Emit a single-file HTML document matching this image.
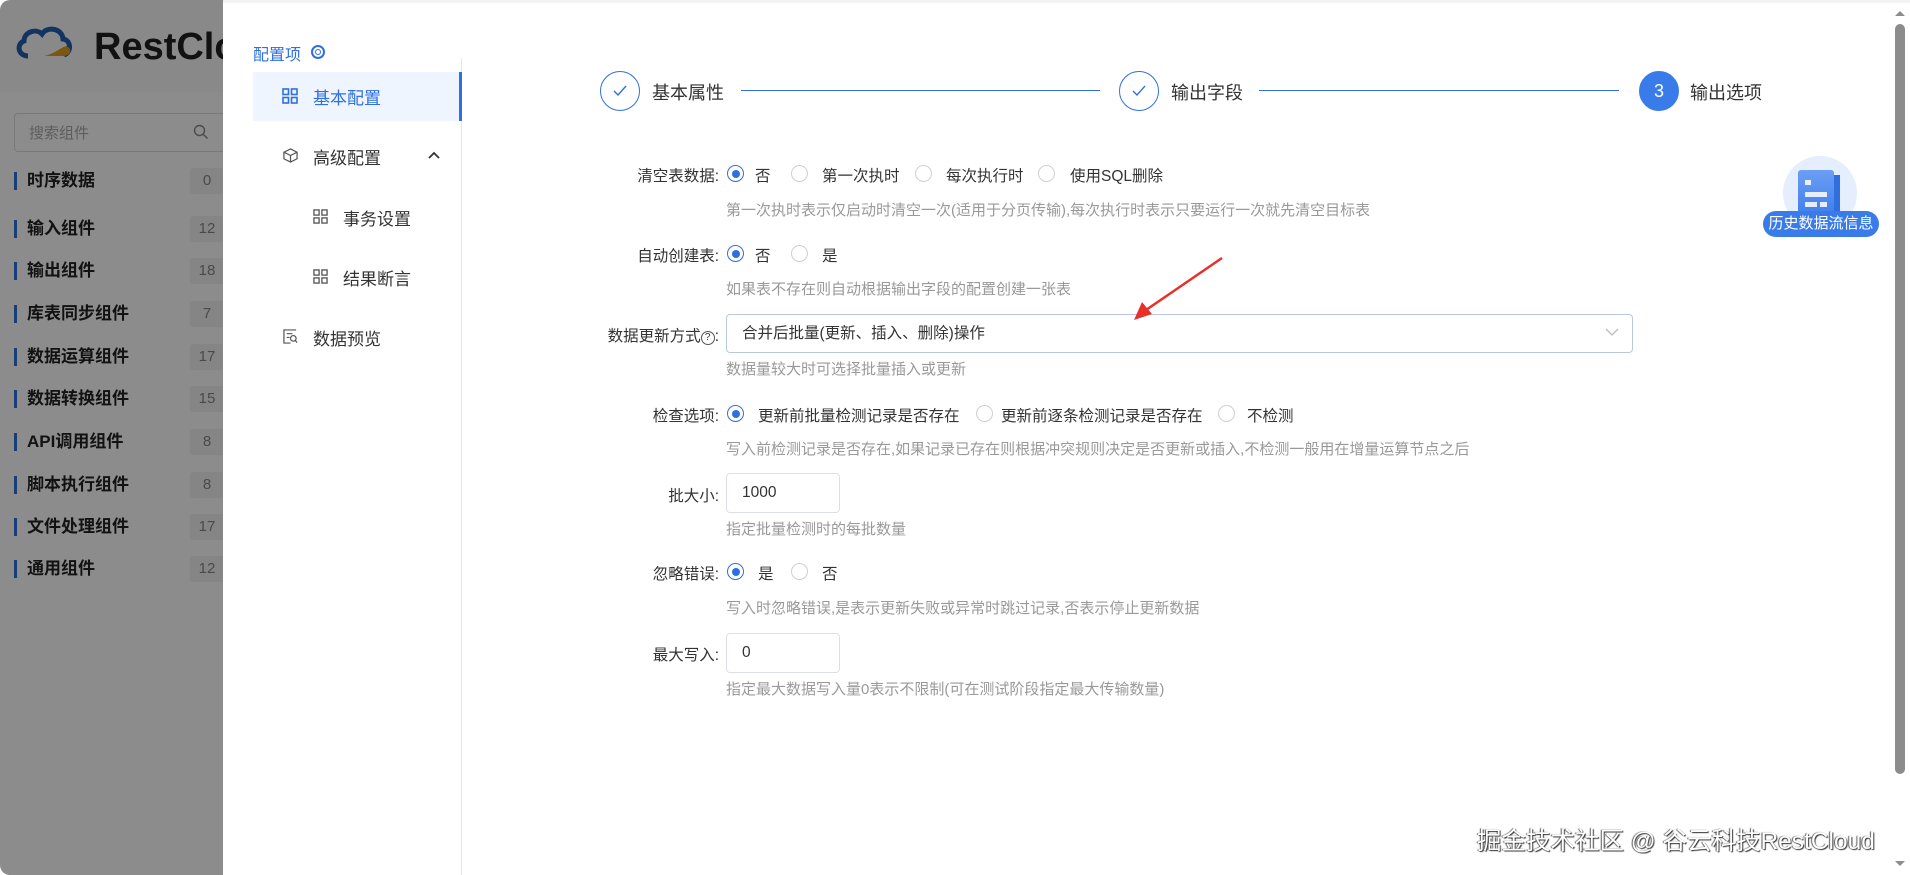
<!DOCTYPE html>
<html><head><meta charset="utf-8">
<style>
*{margin:0;padding:0;box-sizing:border-box}
body{width:1910px;height:875px;overflow:hidden;background:#fff;font-family:"Liberation Sans","Noto Sans CJK SC",sans-serif;position:relative;color:#333}
.a{position:absolute;white-space:nowrap}
#left{position:absolute;left:0;top:0;width:223px;height:875px;background:#fff;overflow:hidden;border-radius:10px 0 0 10px}
#ov{position:absolute;left:0;top:0;width:223px;height:875px;background:rgba(0,0,0,0.45);border-radius:10px 0 0 10px}
.cat{position:absolute;left:14px;font-size:17px;font-weight:bold;color:#222;border-left:3px solid #2f6fe0;padding-left:10px;line-height:18px}
.cnt{position:absolute;left:190px;width:34px;height:26px;background:#f2f2f2;color:#888;font-size:15px;text-align:center;line-height:26px;border-radius:3px}
.mi{position:absolute;font-size:17px;color:#333}
.lab{position:absolute;right:1191px;font-size:15.5px;color:#333;text-align:right}
.hint{position:absolute;left:726px;font-size:15px;color:#999}
.r{position:absolute;width:17px;height:17px;border-radius:50%;border:1px solid #d0d0d0;background:#fff}
.r.on{border-color:#2f6fe0}
.r.on:after{content:"";position:absolute;left:3.5px;top:3.5px;width:8px;height:8px;border-radius:50%;background:#2f6fe0}
.rt{position:absolute;font-size:15.5px;color:#333}
.inp{position:absolute;border:1px solid #dcdfe6;border-radius:4px;background:#fff;font-size:15.5px;color:#333;padding-left:15px}
.circ{position:absolute;width:40px;height:40px;border-radius:50%;border:1px solid #2f6fe0;top:71px}
.stt{position:absolute;top:79px;font-size:18px;color:#333}
.ln{position:absolute;top:90px;height:1px;background:#2f6fe0}
</style></head><body>
<div id="left">
  <div class="a" style="left:0;top:0;width:223px;height:92px;background:#fafafa"></div>
  <svg class="a" style="left:14px;top:24px" width="60" height="36" viewBox="0 0 60 36"><path d="M14 32 C4 32 2 20 10 17 C10 8 22 4 28 10 C33 2 48 4 49 15 C57 16 58 28 50 31" fill="none" stroke="#1f5fb0" stroke-width="5"/><path d="M52 22 C58 24 58 31 50 32 L30 32 C40 30 46 24 52 22Z" fill="#e0a020"/></svg>
  <div class="a" style="left:94px;top:26px;font-size:38px;font-weight:bold;color:#222">RestCloud</div>
  <div class="a" style="left:14px;top:113px;width:240px;height:39px;border:1px solid #ddd;border-radius:4px"></div>
  <div class="a" style="left:29px;top:122px;font-size:15px;color:#aaa">搜索组件</div>
  <svg class="a" style="left:193px;top:124px" width="16" height="16" viewBox="0 0 16 16"><circle cx="6.5" cy="6.5" r="5" fill="none" stroke="#888" stroke-width="1.4"/><path d="M10.5 10.5 L14.5 14.5" stroke="#888" stroke-width="1.4"/></svg>
  <div class="cat" style="top:172px">时序数据</div><div class="cnt" style="top:168px">0</div>
  <div class="cat" style="top:220px">输入组件</div><div class="cnt" style="top:216px">12</div>
  <div class="cat" style="top:262px">输出组件</div><div class="cnt" style="top:258px">18</div>
  <div class="cat" style="top:305px">库表同步组件</div><div class="cnt" style="top:301px">7</div>
  <div class="cat" style="top:348px">数据运算组件</div><div class="cnt" style="top:344px">17</div>
  <div class="cat" style="top:390px">数据转换组件</div><div class="cnt" style="top:386px">15</div>
  <div class="cat" style="top:433px">API调用组件</div><div class="cnt" style="top:429px">8</div>
  <div class="cat" style="top:476px">脚本执行组件</div><div class="cnt" style="top:472px">8</div>
  <div class="cat" style="top:518px">文件处理组件</div><div class="cnt" style="top:514px">17</div>
  <div class="cat" style="top:560px">通用组件</div><div class="cnt" style="top:556px">12</div>
</div>
<div id="ov"></div>
<div class="a" style="left:223px;top:0;width:1687px;height:3px;background:#f3f3f3"></div>

<!-- nav -->
<div class="a" style="left:461px;top:58px;width:1px;height:817px;background:#e6e6e6"></div>
<div class="a" style="left:253px;top:41px;font-size:16px;color:#2f6fe0">配置项</div>
<div class="a" style="left:311px;top:45px;width:14px;height:14px;border:2px solid #2f6fe0;border-radius:50%"></div>
<div class="a" style="left:315px;top:49px;width:6px;height:6px;border:1.5px solid #2f6fe0;border-radius:50%"></div>
<div class="a" style="left:253px;top:72px;width:209px;height:49px;background:#eef5ff;border-right:3px solid #2f6fe0"></div>
<svg class="a" style="left:282px;top:88px" width="16" height="16" viewBox="0 0 16 16"><g fill="none" stroke="#2f6fe0" stroke-width="1.6"><rect x="1" y="1" width="5.5" height="5.5"/><rect x="9.5" y="1" width="5.5" height="5.5"/><rect x="1" y="9.5" width="5.5" height="5.5"/><rect x="9.5" y="9.5" width="5.5" height="5.5"/></g></svg>
<div class="mi" style="left:313px;top:84px;color:#2f6fe0">基本配置</div>
<svg class="a" style="left:283px;top:148px" width="15" height="15" viewBox="0 0 16 16"><g fill="none" stroke="#555" stroke-width="1.3"><path d="M8 1 L15 4.5 L15 11.5 L8 15 L1 11.5 L1 4.5Z M1 4.5 L8 8 L15 4.5 M8 8 L8 15"/></g></svg>
<div class="mi" style="left:313px;top:144px">高级配置</div>
<svg class="a" style="left:428px;top:151px" width="12" height="8" viewBox="0 0 12 8"><path d="M1 7 L6 2 L11 7" fill="none" stroke="#333" stroke-width="1.8"/></svg>
<svg class="a" style="left:313px;top:209px" width="15" height="15" viewBox="0 0 16 16"><g fill="none" stroke="#555" stroke-width="1.4"><rect x="1" y="1" width="5.5" height="5.5"/><rect x="9.5" y="1" width="5.5" height="5.5"/><rect x="1" y="9.5" width="5.5" height="5.5"/><rect x="9.5" y="9.5" width="5.5" height="5.5"/></g></svg>
<div class="mi" style="left:343px;top:205px">事务设置</div>
<svg class="a" style="left:313px;top:269px" width="15" height="15" viewBox="0 0 16 16"><g fill="none" stroke="#555" stroke-width="1.4"><rect x="1" y="1" width="5.5" height="5.5"/><rect x="9.5" y="1" width="5.5" height="5.5"/><rect x="1" y="9.5" width="5.5" height="5.5"/><rect x="9.5" y="9.5" width="5.5" height="5.5"/></g></svg>
<div class="mi" style="left:343px;top:265px">结果断言</div>
<svg class="a" style="left:283px;top:329px" width="15" height="15" viewBox="0 0 16 16"><g fill="none" stroke="#555" stroke-width="1.3"><path d="M14 1 L1 1 L1 15 L8 15 M4 5 L10 5 M4 9 L7 9"/><circle cx="11" cy="10" r="3"/><path d="M13 12 L15 14.5"/></g></svg>
<div class="mi" style="left:313px;top:325px">数据预览</div>

<!-- steps -->
<div class="circ" style="left:600px"></div>
<svg class="a" style="left:612px;top:84px" width="16" height="14" viewBox="0 0 16 14"><path d="M2 7 L6 11 L14 2" fill="none" stroke="#2f6fe0" stroke-width="1.4"/></svg>
<div class="stt" style="left:652px">基本属性</div>
<div class="ln" style="left:741px;width:359px"></div>
<div class="circ" style="left:1119px"></div>
<svg class="a" style="left:1131px;top:84px" width="16" height="14" viewBox="0 0 16 14"><path d="M2 7 L6 11 L14 2" fill="none" stroke="#2f6fe0" stroke-width="1.4"/></svg>
<div class="stt" style="left:1171px">输出字段</div>
<div class="ln" style="left:1259px;width:360px"></div>
<div class="circ" style="left:1639px;background:#3a7bea;border-color:#3a7bea;color:#fff;font-size:18px;text-align:center;line-height:38px">3</div>
<div class="stt" style="left:1690px">输出选项</div>

<!-- form -->
<div class="lab" style="top:164px">清空表数据:</div>
<div class="r on" style="left:727px;top:165px"></div><div class="rt" style="left:755px;top:164px">否</div>
<div class="r" style="left:791px;top:165px"></div><div class="rt" style="left:822px;top:164px">第一次执时</div>
<div class="r" style="left:915px;top:165px"></div><div class="rt" style="left:946px;top:164px">每次执行时</div>
<div class="r" style="left:1038px;top:165px"></div><div class="rt" style="left:1070px;top:164px">使用SQL删除</div>
<div class="hint" style="top:199px">第一次执时表示仅启动时清空一次(适用于分页传输),每次执行时表示只要运行一次就先清空目标表</div>

<div class="lab" style="top:244px">自动创建表:</div>
<div class="r on" style="left:727px;top:245px"></div><div class="rt" style="left:755px;top:244px">否</div>
<div class="r" style="left:791px;top:245px"></div><div class="rt" style="left:822px;top:244px">是</div>
<div class="hint" style="top:278px">如果表不存在则自动根据输出字段的配置创建一张表</div>

<div class="lab" style="top:324px">数据更新方式<span style="display:inline-block;width:14px;height:14px;border:1px solid #555;border-radius:50%;font-size:10px;line-height:12px;text-align:center;vertical-align:1px">?</span>:</div>
<div class="inp" style="left:726px;top:314px;width:907px;height:39px;border-color:#b8c8e0;line-height:37px">合并后批量(更新、插入、删除)操作</div>
<svg class="a" style="left:1605px;top:328px" width="14" height="9" viewBox="0 0 14 9"><path d="M1 1 L7 7 L13 1" fill="none" stroke="#bbb" stroke-width="1.3"/></svg>
<div class="hint" style="top:358px">数据量较大时可选择批量插入或更新</div>

<div class="lab" style="top:404px">检查选项:</div>
<div class="r on" style="left:727px;top:405px"></div><div class="rt" style="left:758px;top:404px">更新前批量检测记录是否存在</div>
<div class="r" style="left:976px;top:405px"></div><div class="rt" style="left:1001px;top:404px">更新前逐条检测记录是否存在</div>
<div class="r" style="left:1218px;top:405px"></div><div class="rt" style="left:1247px;top:404px">不检测</div>
<div class="hint" style="top:438px">写入前检测记录是否存在,如果记录已存在则根据冲突规则决定是否更新或插入,不检测一般用在增量运算节点之后</div>

<div class="lab" style="top:484px">批大小:</div>
<div class="inp" style="left:726px;top:473px;width:114px;height:40px;line-height:38px">1000</div>
<div class="hint" style="top:518px">指定批量检测时的每批数量</div>

<div class="lab" style="top:562px">忽略错误:</div>
<div class="r on" style="left:727px;top:563px"></div><div class="rt" style="left:758px;top:562px">是</div>
<div class="r" style="left:791px;top:563px"></div><div class="rt" style="left:822px;top:562px">否</div>
<div class="hint" style="top:597px">写入时忽略错误,是表示更新失败或异常时跳过记录,否表示停止更新数据</div>

<div class="lab" style="top:643px">最大写入:</div>
<div class="inp" style="left:726px;top:633px;width:114px;height:40px;line-height:38px">0</div>
<div class="hint" style="top:678px">指定最大数据写入量0表示不限制(可在测试阶段指定最大传输数量)</div>

<!-- arrow -->
<svg class="a" style="left:1120px;top:250px" width="110" height="80" viewBox="0 0 110 80"><path d="M102 8 L26 60" stroke="#e8302a" stroke-width="2.5"/><path d="M14 70 L22 52 L32 64Z" fill="#e8302a"/></svg>

<!-- floating badge -->
<div class="a" style="left:1783px;top:156px;width:74px;height:74px;border-radius:50%;background:#e4eefc"></div>
<div class="a" style="left:1798px;top:170px;width:36px;height:50px;background:linear-gradient(#6d9ef5,#3a7bea);border-radius:3px"></div>
<div class="a" style="left:1834px;top:175px;width:6px;height:45px;background:#2f6fe0"></div>
<div class="a" style="left:1805px;top:180px;width:6px;height:5px;background:#fff;opacity:.85"></div>
<div class="a" style="left:1805px;top:192px;width:22px;height:5px;background:#fff;opacity:.85"></div>
<div class="a" style="left:1805px;top:202px;width:12px;height:5px;background:#fff;opacity:.85"></div>
<div class="a" style="left:1820px;top:202px;width:7px;height:5px;background:#fff;opacity:.85"></div>
<div class="a" style="left:1763px;top:211px;width:116px;height:26px;border-radius:13px;background:#3a7bea;color:#fff;font-size:15px;text-align:center;line-height:26px">历史数据流信息</div>

<!-- scrollbar -->
<div class="a" style="left:1895px;top:24px;width:10px;height:750px;background:#8c8c8c;border-radius:5px"></div>
<div class="a" style="left:1895px;top:11px;width:0;height:0;border-left:5px solid transparent;border-right:5px solid transparent;border-bottom:5px solid #8c8c8c"></div>
<div class="a" style="left:1895px;top:861px;width:0;height:0;border-left:5px solid transparent;border-right:5px solid transparent;border-top:5px solid #8c8c8c"></div>

<!-- watermark -->
<div class="a" style="left:1477px;top:822px;font-size:24.5px;color:#fff;text-shadow:1px 1px 1px #333,-1px 0 1px #555">掘金技术社区 @ 谷云科技RestCloud</div>
</body></html>
